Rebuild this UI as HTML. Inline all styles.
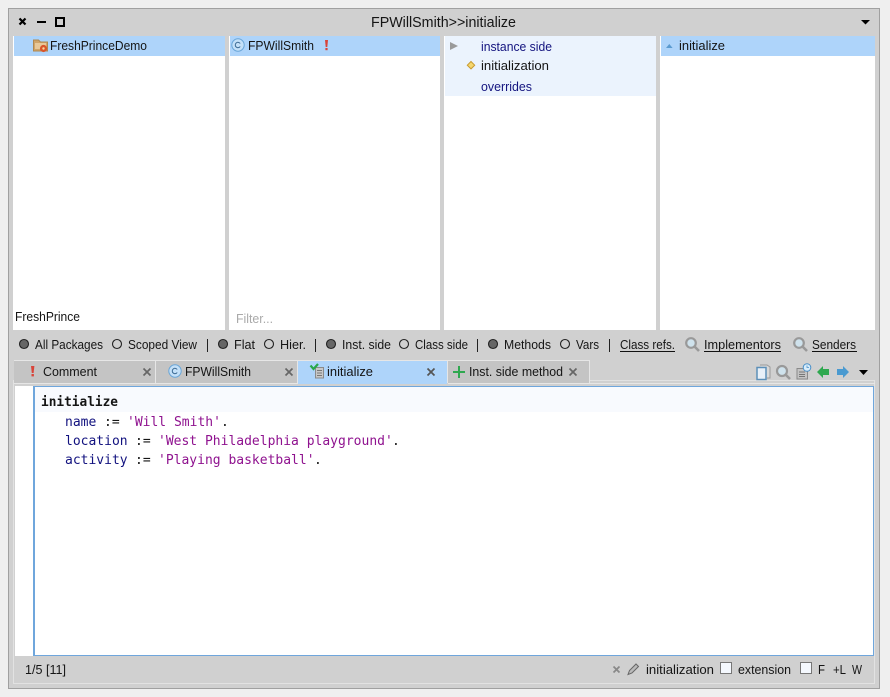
<!DOCTYPE html>
<html><head><meta charset="utf-8"><style>
html,body{margin:0;padding:0;background:#efefef;width:890px;height:697px;overflow:hidden}
svg{display:block}
text{font-family:"Liberation Sans",sans-serif;font-size:13px;fill:#151515}
.m{font-family:"DejaVu Sans Mono","Liberation Mono",monospace;font-size:13px}
.n{fill:#12127f}.s{fill:#8f128f}
.u{fill:#14147f}
</style></head><body>
<svg width="890" height="697" viewBox="0 0 890 697" xmlns="http://www.w3.org/2000/svg">
<rect width="890" height="697" fill="#efefef"/>
<rect x="8.5" y="8.5" width="871" height="680" fill="#d0d0d0" stroke="#a0a0a0"/>
<rect x="13.500" y="380.500" width="861" height="303" fill="none" stroke="#e2e2e2"/>
<rect x="9" y="9" width="870" height="27" fill="#d0d0d0"/>
<!-- title bar -->
<path d="M19.500 18.500l6 6M25.500 18.500l-6 6" stroke="#000" stroke-width="2.200"/>
<rect x="37" y="21" width="9" height="2" fill="#000"/>
<rect x="56" y="18" width="8" height="8" fill="none" stroke="#000" stroke-width="2"/>
<text x="371" y="27" style="font-size:14.500px" textLength="145" lengthAdjust="spacingAndGlyphs">FPWillSmith&gt;&gt;initialize</text>
<path d="M861 20h9l-4.500 4.500z" fill="#000"/>
<!-- panes -->
<rect x="13" y="36" width="212" height="294" fill="#fff"/>
<rect x="14" y="36" width="211" height="20" fill="#aed4fa"/>
<rect x="229" y="36" width="211" height="294" fill="#fff"/>
<rect x="230" y="36" width="210" height="20" fill="#aed4fa"/>
<rect x="444" y="36" width="212" height="294" fill="#fff"/>
<rect x="445" y="36" width="211" height="60" fill="#ebf3fd"/>
<rect x="660" y="36" width="215" height="294" fill="#fff"/>
<rect x="661" y="36" width="214" height="20" fill="#aed4fa"/>
<!-- pane 1 -->
<path d="M33.500 40h5l2 2h7v9h-14z" fill="#d0a468" stroke="#b08850"/>
<rect x="35" y="43" width="11" height="6" fill="#e8c898"/>
<circle cx="43.500" cy="48.500" r="3.600" fill="#d9552b"/>
<circle cx="43.500" cy="48.500" r="1.200" fill="#f6d9a0"/>
<text x="50" y="50" textLength="97" lengthAdjust="spacingAndGlyphs">FreshPrinceDemo</text>
<text x="15" y="321" textLength="65" lengthAdjust="spacingAndGlyphs">FreshPrince</text>
<!-- pane 2 -->
<circle cx="238" cy="45" r="6.200" fill="#c4e0f8" stroke="#6aa6d8"/>
<path d="M240.200 43.500a2.700 2.700 0 1 0 0 3" fill="none" stroke="#3b6a94" stroke-width="1"/>
<text x="248" y="50" textLength="66" lengthAdjust="spacingAndGlyphs">FPWillSmith</text>
<path d="M325 40h3l-.7 7h-1.600z" fill="#d8443a"/><rect x="325.400" y="48" width="2.200" height="2.200" fill="#d8443a"/>
<text x="236" y="323" style="fill:#aaa" textLength="37" lengthAdjust="spacingAndGlyphs">Filter...</text>
<!-- pane 3 -->
<path d="M450 42l8 4-8 4z" fill="#9a9a9a"/>
<text x="481" y="51" class="u" textLength="71" lengthAdjust="spacingAndGlyphs">instance side</text>
<path d="M471 61.500l3.700 3.700-3.700 3.700-3.700-3.700z" fill="#f5d76e" stroke="#c89a30"/>
<text x="481" y="70" textLength="68" lengthAdjust="spacingAndGlyphs">initialization</text>
<text x="481" y="91" class="u" textLength="51" lengthAdjust="spacingAndGlyphs">overrides</text>
<!-- pane 4 -->
<path d="M666 48l3.300-4 3.300 4z" fill="#5b9bd0"/>
<text x="679" y="50" textLength="46" lengthAdjust="spacingAndGlyphs">initialize</text>
<!-- radio row -->
<g fill="#fff" fill-opacity="0" stroke="#222" stroke-width="1.100">
<circle cx="24" cy="344" r="4.500" fill="#666" fill-opacity="1"/>
<circle cx="117" cy="344" r="4.500"/>
<circle cx="223" cy="344" r="4.500" fill="#666" fill-opacity="1"/>
<circle cx="269" cy="344" r="4.500"/>
<circle cx="331" cy="344" r="4.500" fill="#666" fill-opacity="1"/>
<circle cx="404" cy="344" r="4.500"/>
<circle cx="493" cy="344" r="4.500" fill="#666" fill-opacity="1"/>
<circle cx="565" cy="344" r="4.500"/>
</g>
<text x="35" y="349" textLength="68" lengthAdjust="spacingAndGlyphs">All Packages</text>
<text x="128" y="349" textLength="69" lengthAdjust="spacingAndGlyphs">Scoped View</text>
<rect x="207" y="339" width="1" height="13" fill="#222"/>
<text x="234" y="349" textLength="21" lengthAdjust="spacingAndGlyphs">Flat</text>
<text x="280" y="349" textLength="26" lengthAdjust="spacingAndGlyphs">Hier.</text>
<rect x="315" y="339" width="1" height="13" fill="#222"/>
<text x="342" y="349" textLength="49" lengthAdjust="spacingAndGlyphs">Inst. side</text>
<text x="415" y="349" textLength="53" lengthAdjust="spacingAndGlyphs">Class side</text>
<rect x="477" y="339" width="1" height="13" fill="#222"/>
<text x="504" y="349" textLength="47" lengthAdjust="spacingAndGlyphs">Methods</text>
<text x="576" y="349" textLength="23" lengthAdjust="spacingAndGlyphs">Vars</text>
<rect x="609" y="339" width="1" height="13" fill="#222"/>
<text x="620" y="349" textLength="55" lengthAdjust="spacingAndGlyphs">Class refs.</text>
<rect x="620" y="351" width="55" height="1" fill="#111"/>
<circle cx="691" cy="343" r="4.800" fill="#cfe2ec" stroke="#999" stroke-width="2.200"/><path d="M694.500 346.500l4.500 4.500" stroke="#999" stroke-width="2.600"/>
<text x="704" y="349" textLength="77" lengthAdjust="spacingAndGlyphs">Implementors</text>
<rect x="704" y="351" width="77" height="1" fill="#111"/>
<circle cx="799" cy="343" r="4.800" fill="#cfe2ec" stroke="#999" stroke-width="2.200"/><path d="M802.500 346.500l4.500 4.500" stroke="#999" stroke-width="2.600"/>
<text x="812" y="349" textLength="44" lengthAdjust="spacingAndGlyphs">Senders</text>
<rect x="812" y="351" width="45" height="1" fill="#111"/>
<!-- tabs -->
<rect x="14" y="360" width="576" height="1" fill="#e6e6e6"/>
<rect x="14" y="361" width="141" height="22" fill="#c4c4c4"/>
<rect x="155" y="361" width="1" height="22" fill="#e6e6e6"/>
<rect x="156" y="361" width="141" height="22" fill="#c4c4c4"/>
<rect x="297" y="361" width="1" height="22" fill="#e6e6e6"/>
<rect x="298" y="361" width="149" height="23" fill="#aed4fa"/>
<rect x="447" y="361" width="1" height="22" fill="#e6e6e6"/>
<rect x="448" y="361" width="141" height="22" fill="#c4c4c4"/>
<rect x="589" y="361" width="1" height="23" fill="#e6e6e6"/>
<rect x="14" y="383" width="284" height="1" fill="#e6e6e6"/>
<rect x="448" y="383" width="427" height="1" fill="#e6e6e6"/>
<path d="M31 366h3.400l-.8 7h-1.800z" fill="#d8443a"/><rect x="31.500" y="374" width="2.400" height="2.400" fill="#d8443a"/>
<text x="43" y="376" textLength="54" lengthAdjust="spacingAndGlyphs">Comment</text>
<path d="M143.500 368.500l7 7M150.500 368.500l-7 7" stroke="#666" stroke-width="1.700"/>
<circle cx="175" cy="371" r="6.200" fill="#c4e0f8" stroke="#6aa6d8"/>
<path d="M177.200 369.500a2.700 2.700 0 1 0 0 3" fill="none" stroke="#3b6a94"/>
<text x="185" y="376" textLength="66" lengthAdjust="spacingAndGlyphs">FPWillSmith</text>
<path d="M285.500 368.500l7 7M292.500 368.500l-7 7" stroke="#666" stroke-width="1.700"/>
<rect x="315.500" y="367.500" width="8" height="10.500" fill="#c8c8c8" stroke="#8a8a8a"/>
<path d="M317 370.500h5M317 373h5M317 375.500h5" stroke="#777"/>
<path d="M310.500 365.500l3 3.500 4.500-5" fill="none" stroke="#2aa84a" stroke-width="2.200"/>
<text x="327" y="376" textLength="46" lengthAdjust="spacingAndGlyphs">initialize</text>
<path d="M427.500 368.500l7 7M434.500 368.500l-7 7" stroke="#555" stroke-width="1.700"/>
<path d="M459 366v12M453 372h12" stroke="#2fa84f" stroke-width="2"/>
<text x="469" y="376" textLength="94" lengthAdjust="spacingAndGlyphs">Inst. side method</text>
<path d="M569.500 368.500l7 7M576.500 368.500l-7 7" stroke="#666" stroke-width="1.700"/>
<!-- toolbar -->
<path d="M760 365h7l3 2v11h-3" fill="#d8d8d8" stroke="#9a9a9a"/>
<rect x="757" y="367.500" width="9" height="12" fill="#e8f0f8" stroke="#5c8fb8" stroke-width="1.500"/>
<circle cx="782" cy="371" r="5" fill="#cfe2ec" stroke="#999" stroke-width="2.200"/><path d="M785.500 374.500l4.500 4.500" stroke="#999" stroke-width="2.600"/>
<rect x="797" y="368.500" width="10.500" height="10.500" fill="#c4c4c4" stroke="#8a8a8a"/>
<path d="M799 372h6M799 374.500h6M799 376.500h6" stroke="#777"/>
<circle cx="807" cy="367.500" r="3.800" fill="#d8ecfa" stroke="#4a90c8"/>
<path d="M807 365.500v2h2" fill="none" stroke="#4a90c8" stroke-width=".8"/>
<path d="M817 372l6-6v3h6v6h-6v3z" fill="#2fa84f"/>
<path d="M849 372l-6-6v3h-6v6h6v3z" fill="#4a9ad0"/>
<path d="M859 370h9l-4.500 5z" fill="#000"/>
<!-- editor -->
<rect x="15" y="386" width="19" height="270" fill="#fff"/>
<rect x="33.500" y="386.500" width="840" height="269" fill="#fff" stroke="#6fa6dc"/>
<rect x="34" y="387" width="1" height="268" fill="#6fa6dc"/>
<rect x="35" y="387" width="838" height="25" fill="#f8fafe"/>
<text class="m" x="41" y="406" style="font-weight:bold" textLength="77" lengthAdjust="spacingAndGlyphs">initialize</text>
<text class="m" y="426"><tspan class="n" x="65">name</tspan><tspan x="104">:=</tspan><tspan class="s" x="127">'Will Smith'</tspan><tspan x="221">.</tspan></text>
<text class="m" y="445"><tspan class="n" x="65">location</tspan><tspan x="135">:=</tspan><tspan class="s" x="158">'West Philadelphia playground'</tspan><tspan x="392">.</tspan></text>
<text class="m" y="464"><tspan class="n" x="65">activity</tspan><tspan x="135">:=</tspan><tspan class="s" x="158">'Playing basketball'</tspan><tspan x="314">.</tspan></text>
<!-- status -->
<text x="25" y="674" textLength="41" lengthAdjust="spacingAndGlyphs">1/5 [11]</text>
<path d="M613.500 666.500l6 6M619.500 666.500l-6 6" stroke="#888" stroke-width="1.700"/>
<path d="M628 674.500l1.500-4 6.500-6.500 2.500 2.500-6.500 6.500z" fill="#bbb" stroke="#666"/>
<text x="646" y="674" textLength="68" lengthAdjust="spacingAndGlyphs">initialization</text>
<rect x="720.500" y="662.500" width="11" height="11" fill="#f4f8fe" stroke="#777"/>
<text x="738" y="674" textLength="53" lengthAdjust="spacingAndGlyphs">extension</text>
<rect x="800.500" y="662.500" width="11" height="11" fill="#f4f8fe" stroke="#777"/>
<text x="818" y="674" textLength="7" lengthAdjust="spacingAndGlyphs">F</text>
<text x="833" y="674" textLength="13" lengthAdjust="spacingAndGlyphs">+L</text>
<text x="852" y="674" textLength="10" lengthAdjust="spacingAndGlyphs">W</text>
</svg>
</body></html>
